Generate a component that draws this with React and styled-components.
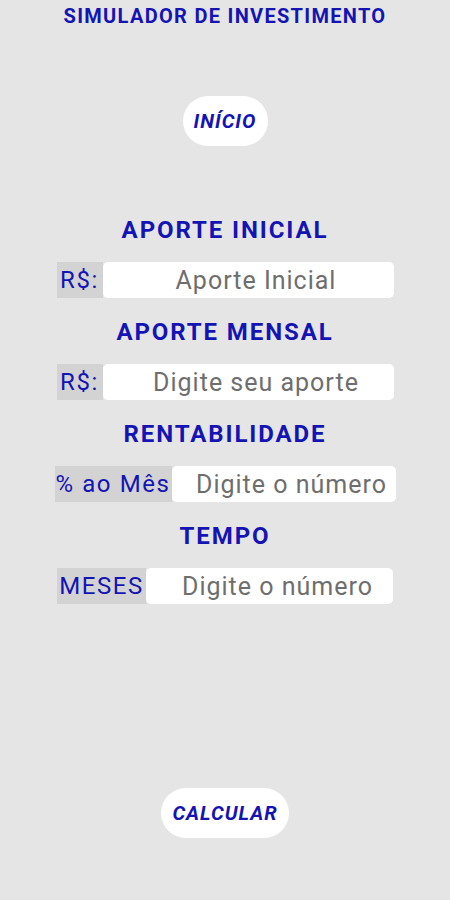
import styled, { createGlobalStyle } from 'styled-components'

const GlobalStyle = createGlobalStyle`
    body {
        margin: 0;
        background: #e5e5e5;
        font-family: Roboto, "Noto Sans", "Liberation Sans", sans-serif;
    }
`

const BLUE = '#1414b4'

const fields = [
    { title: 'APORTE INICIAL', label: 'R$:', placeholder: 'Aporte Inicial', labelWidth: 46, width: 337 },
    { title: 'APORTE MENSAL', label: 'R$:', placeholder: 'Digite seu aporte', labelWidth: 46, width: 337 },
    { title: 'RENTABILIDADE', label: '% ao Mês', placeholder: 'Digite o número', labelWidth: 117, width: 341 },
    { title: 'TEMPO', label: 'MESES', placeholder: 'Digite o número', labelWidth: 89, width: 336 },
]

const Field = ({ title, label, placeholder, labelWidth, width }) => {

    return (
        <>
            <Heading>{title}</Heading>
            <Row $width={width}>
                <Label $width={labelWidth}>{label}</Label>
                <Input placeholder={placeholder} />
            </Row>
        </>
    )
}

const App = () => {

    return (
        <Page>
            <GlobalStyle />
            <Title>SIMULADOR DE INVESTIMENTO</Title>

            <PillButton $width={85} $top={68}>INÍCIO</PillButton>

            <Form>
                {fields.map((item) =>
                    <Field key={item.title} {...item} />
                )}
            </Form>

            <PillButton $width={128} $top={164}>CALCULAR</PillButton>
        </Page>
    )
}

export default App

const Page = styled.div`
    display: flex;
    flex-direction: column;
    align-items: center;
    width: 450px;
    height: 900px;
    background: #e5e5e5;
`

const Title = styled.h1`
    margin: 0;
    padding-top: 4px;
    font-size: 20px;
    line-height: 24px;
    font-weight: 700;
    letter-spacing: 1.3px;
    color: ${BLUE};
`

const PillButton = styled.button`
    margin-top: ${props => props.$top}px;
    width: ${props => props.$width}px;
    height: 50px;
    border: none;
    border-radius: 25px;
    background: white;
    color: ${BLUE};
    font-family: Roboto, sans-serif;
    font-size: 20px;
    font-weight: 700;
    font-style: italic;
    letter-spacing: 1px;
    padding: 0;
`

const Form = styled.div`
    display: flex;
    flex-direction: column;
    align-items: center;
    margin-top: 70px;
`

const Heading = styled.h2`
    margin: 0;
    height: 28px;
    font-size: 24px;
    line-height: 28px;
    font-weight: 700;
    letter-spacing: 1.9px;
    color: ${BLUE};
`

const Row = styled.div`
    display: flex;
    width: ${props => props.$width}px;
    height: 36px;
    margin: 18px 0 20px;
`

const Label = styled.div`
    flex: none;
    width: ${props => props.$width}px;
    display: flex;
    align-items: center;
    justify-content: center;
    background: #d3d3d3;
    color: ${BLUE};
    font-size: 24px;
    letter-spacing: 1.6px;
    white-space: nowrap;
    overflow: hidden;
`

const Input = styled.input`
    flex: 1;
    min-width: 0;
    height: 36px;
    box-sizing: border-box;
    border: none;
    border-radius: 5px;
    background: white;
    padding: 0 0 0 16px;
    text-align: center;
    font-family: Roboto, sans-serif;
    font-size: 25px;
    letter-spacing: 1px;
    color: #333;
    outline: none;

    &::placeholder {
        color: #6e6e6e;
    }
`
